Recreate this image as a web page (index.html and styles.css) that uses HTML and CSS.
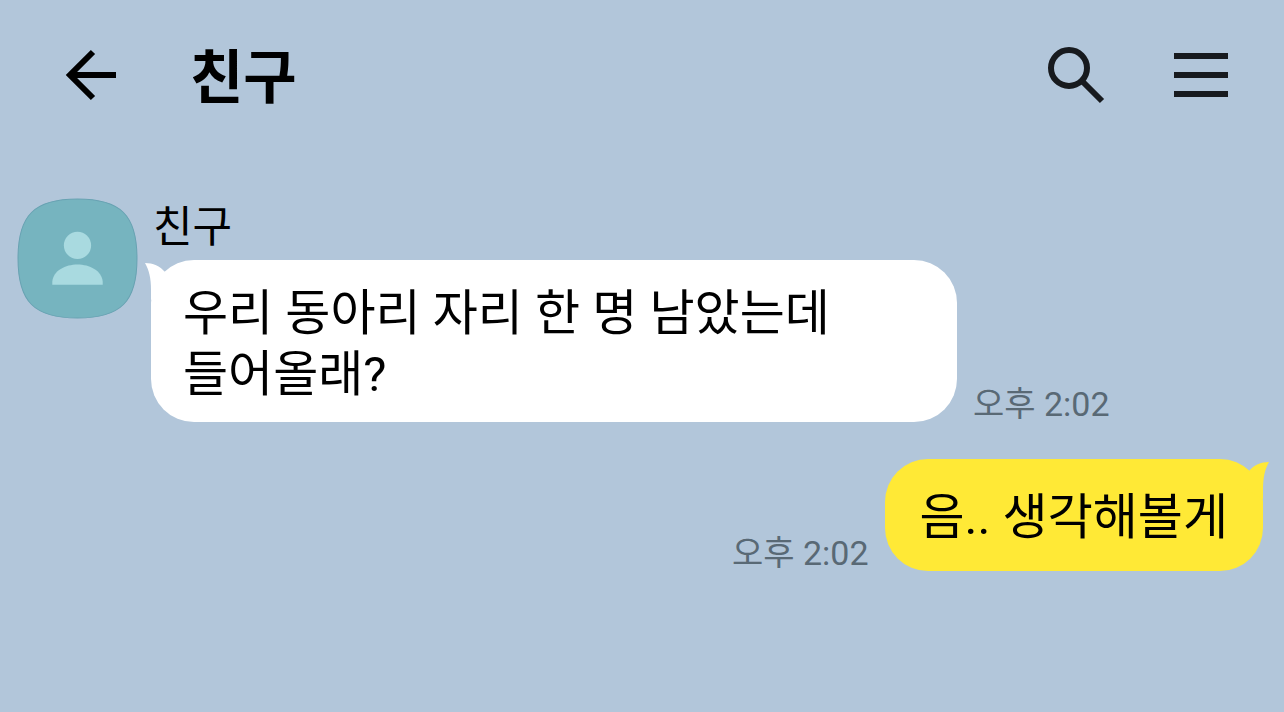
FILE: index.html
```html
<!DOCTYPE html>
<html lang="ko">
<head>
<meta charset="utf-8">
<meta name="viewport" content="width=device-width, initial-scale=1">
<title>친구</title>
<link rel="stylesheet" href="styles.css">
</head>
<body>
<header class="bar">
  <button class="icon-button" type="button" aria-label="뒤로">
    <svg width="56" height="56" viewBox="0 0 56 56" fill="none" stroke="#000" stroke-width="6"><path d="M54 28H7M31 5L8 28L31 51"/></svg>
  </button>
  <h1 class="title">친구</h1>
  <div class="actions">
    <button class="icon-button" type="button" aria-label="검색">
      <svg width="60" height="60" viewBox="0 0 60 60" fill="none" stroke="#171a1e" stroke-width="6"><circle cx="24" cy="23" r="18"/><path d="M36 35L57 56"/></svg>
    </button>
    <button class="icon-button" type="button" aria-label="메뉴">
      <svg width="56" height="60" viewBox="0 0 56 60" fill="#171a1e"><path d="M1 8H55V14H1ZM1 27H55V33H1ZM1 46H55V52H1Z"/></svg>
    </button>
  </div>
</header>
<main class="chat">
  <section class="message">
    <svg class="avatar" viewBox="0 0 120 120" role="img" aria-label="친구">
      <path d="M60 1C103 1 119 17 119 60C119 103 103 119 60 119C17 119 1 103 1 60C1 17 17 1 60 1Z" fill="#76b4bf" stroke="#68a2b2" stroke-width="1"/>
      <circle cx="60" cy="47" r="13.5" fill="#a9dae0"/>
      <path d="M35 86V83C36 72 48 66 60 66C72 66 84 72 85 83V86Z" fill="#a9dae0"/>
    </svg>
    <div class="content">
      <h2 class="name">친구</h2>
      <div class="line">
        <div class="bubble">
          <svg class="tail" viewBox="0 0 32 40" fill="#fff" aria-hidden="true"><path d="M0 3C8 3 15 6 20 12L32 25L6 40V30C6 18 4 10 0 3Z"/></svg>
          <p class="text">우리 동아리 자리 한 명 남았는데 들어올래?</p>
        </div>
        <time class="time" datetime="14:02">오후 2:02</time>
      </div>
    </div>
  </section>
  <section class="line line-mine">
    <time class="time" datetime="14:02">오후 2:02</time>
    <div class="bubble bubble-mine">
      <svg class="tail tail-mine" viewBox="0 0 32 40" fill="#ffe936" aria-hidden="true"><path d="M32 3C24 3 17 6 12 12L0 25L26 40V30C26 18 28 10 32 3Z"/></svg>
      <p class="text">음.. 생각해볼게</p>
    </div>
  </section>
</main>
</body>
</html>
```
FILE: styles.css
```css
* {
  box-sizing: border-box;
}

body {
  margin: 0;
  min-height: 100vh;
  background: #b2c6da;
  color: #000;
  font-family: Roboto, "Noto Sans CJK KR", sans-serif;
}

h1, h2, p {
  margin: 0;
}

.bar {
  display: flex;
  align-items: center;
  height: 150px;
  padding: 0 55px 0 62px;
}

.icon-button {
  display: flex;
  padding: 0;
  border: 0;
  background: none;
  cursor: pointer;
}

.title {
  margin-left: 72px;
  padding-top: 5px;
  font-size: 58px;
  line-height: 64px;
  font-weight: 700;
}

.actions {
  display: flex;
  align-items: center;
  gap: 68px;
  margin-left: auto;
}

.chat {
  display: flex;
  flex-direction: column;
  gap: 37px;
  padding: 48px 21px 32px 17px;
}

.message {
  display: flex;
  gap: 13px;
}

.avatar {
  flex: none;
  width: 121px;
  height: 121px;
}

.content {
  flex: 1;
  min-width: 0;
}

.name {
  margin-left: 2px;
  padding: 3px 0 7px;
  font-size: 43px;
  line-height: 52px;
  font-weight: 400;
}

.line {
  display: flex;
  align-items: flex-end;
  gap: 16px;
}

.line-mine {
  justify-content: flex-end;
}

.bubble {
  position: relative;
  display: flex;
  align-items: center;
  max-width: 806px;
  min-height: 112px;
  padding: 23px 32px 17px;
  border-radius: 43px;
  background: #fff;
}

.bubble-mine {
  padding: 22px 35px 18px;
  background: #ffe936;
}

.text {
  font-size: 49px;
  line-height: 61px;
  word-break: keep-all;
}

.tail {
  position: absolute;
  top: 0;
  left: -6px;
  width: 32px;
  height: 40px;
}

.tail-mine {
  left: auto;
  right: -6px;
}

.time {
  flex: none;
  color: #596975;
  font-size: 34px;
  line-height: 36px;
}
```
